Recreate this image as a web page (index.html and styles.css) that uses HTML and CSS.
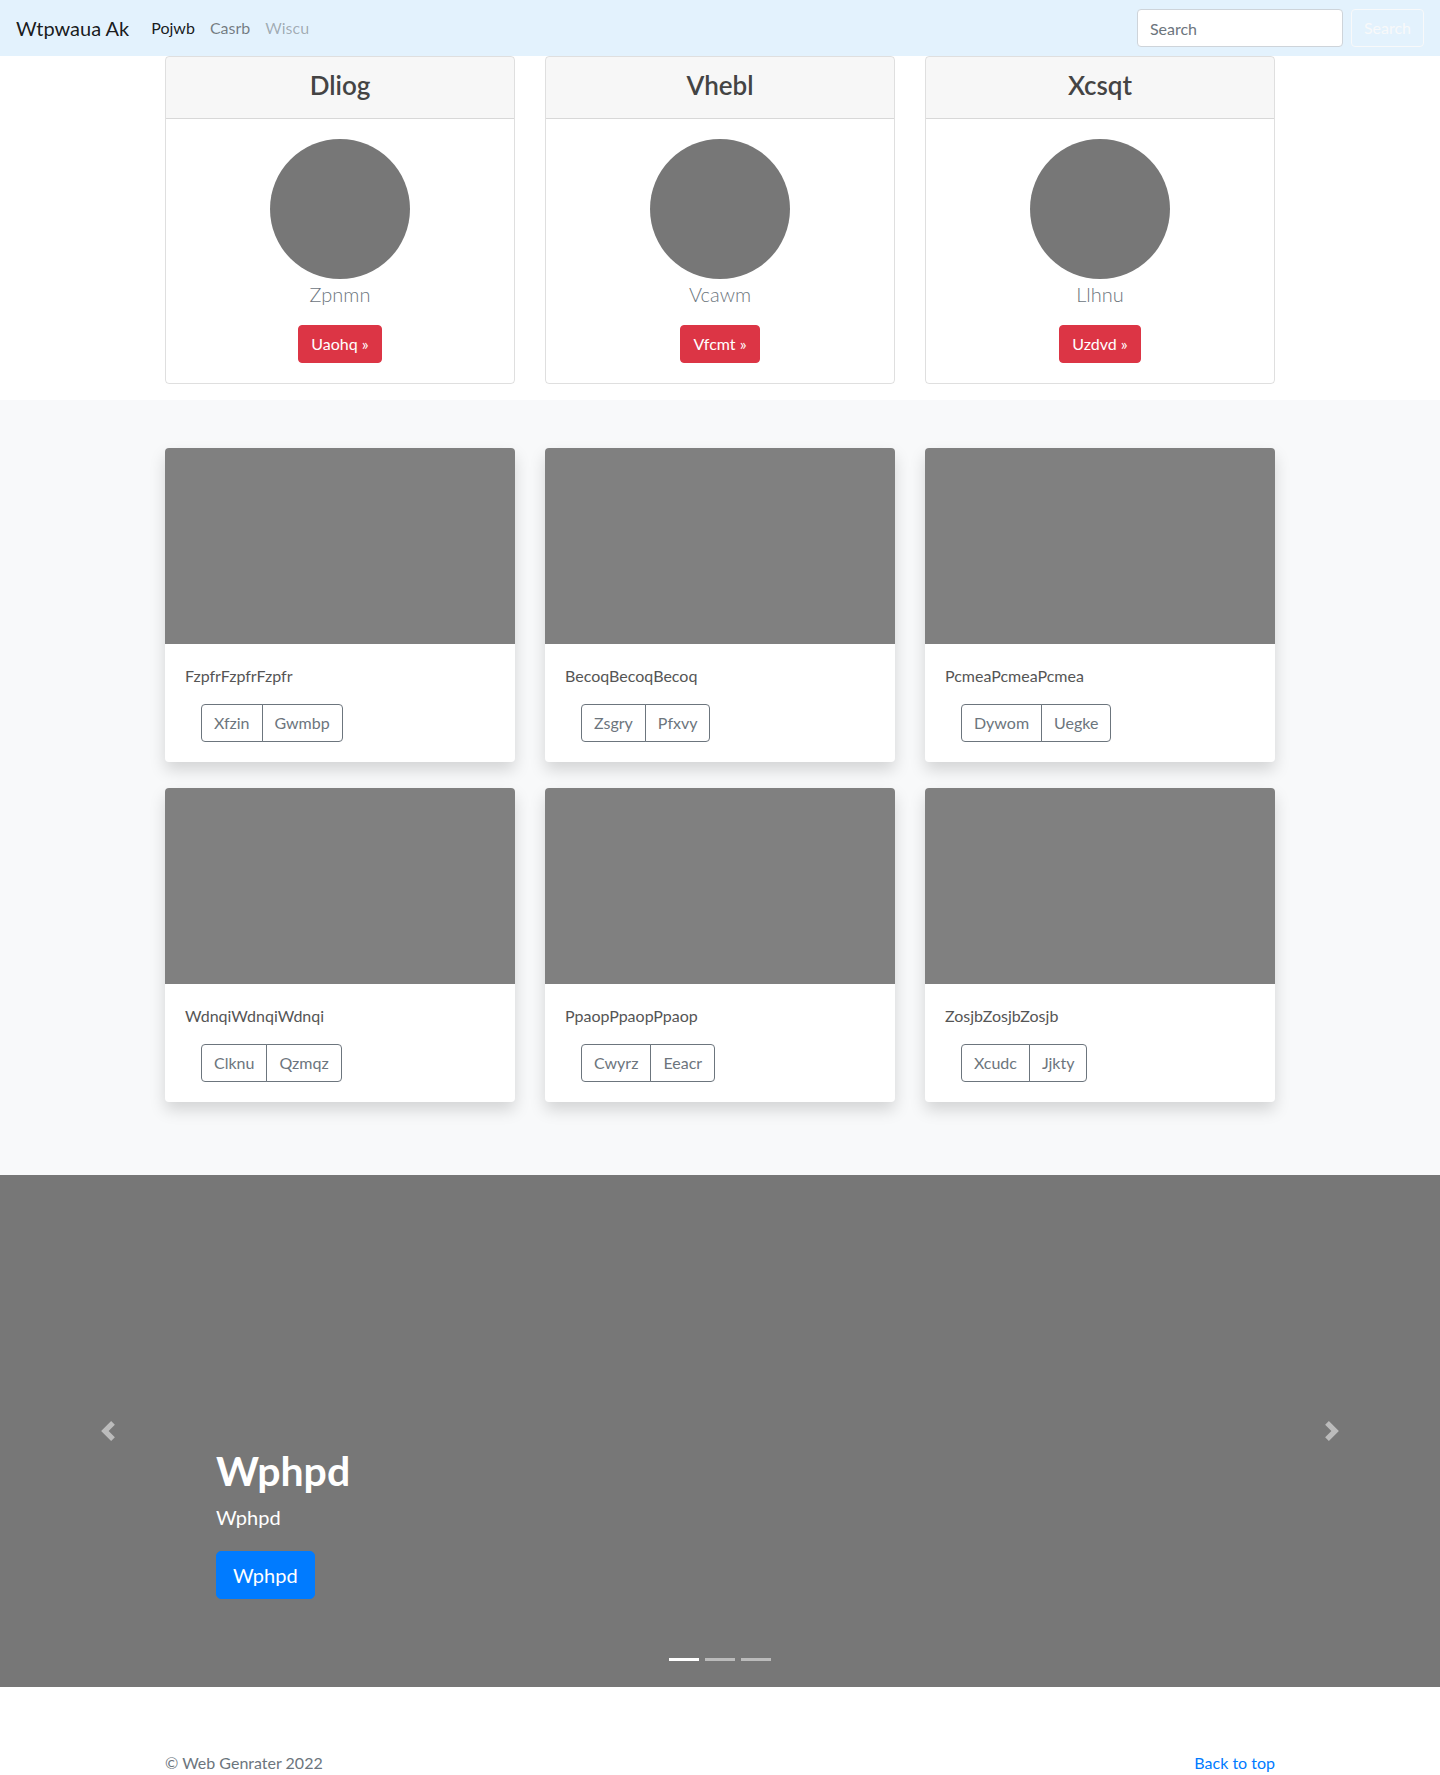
FILE: index.html
```
<!DOCTYPE html>
<html lang="en">
<head>
<meta charset="utf-8">
<title>Wtpwaua Ak</title>
<link rel="stylesheet" href="styles.css">
</head>
<body>
<nav class="navbar">
  <a class="brand" href="#">Wtpwaua Ak</a>
  <ul class="nav">
    <li><a class="nav-link active" href="#">Pojwb</a></li>
    <li><a class="nav-link" href="#">Casrb</a></li>
    <li><a class="nav-link disabled" href="#">Wiscu</a></li>
  </ul>
  <form class="search">
    <input class="search-input" type="text" placeholder="Search">
    <button class="search-btn" type="button">Search</button>
  </form>
</nav>

<section class="pricing">
  <div class="container grid-3">
    <div class="pcard">
      <div class="pcard-header"><h3>Dliog</h3></div>
      <div class="pcard-body">
        <div class="avatar"></div>
        <p class="lead">Zpnmn</p>
        <a class="btn btn-danger" href="#">Uaohq &raquo;</a>
      </div>
    </div>
    <div class="pcard">
      <div class="pcard-header"><h3>Vhebl</h3></div>
      <div class="pcard-body">
        <div class="avatar"></div>
        <p class="lead">Vcawm</p>
        <a class="btn btn-danger" href="#">Vfcmt &raquo;</a>
      </div>
    </div>
    <div class="pcard">
      <div class="pcard-header"><h3>Xcsqt</h3></div>
      <div class="pcard-body">
        <div class="avatar"></div>
        <p class="lead">Llhnu</p>
        <a class="btn btn-danger" href="#">Uzdvd &raquo;</a>
      </div>
    </div>
  </div>
</section>

<section class="album">
  <div class="container grid-3 album-grid">
    <div class="acard">
      <div class="thumb"></div>
      <div class="acard-body">
        <p class="acard-text">FzpfrFzpfrFzpfr</p>
        <div class="btn-group"><button class="btn btn-outline">Xfzin</button><button class="btn btn-outline">Gwmbp</button></div>
      </div>
    </div>
    <div class="acard">
      <div class="thumb"></div>
      <div class="acard-body">
        <p class="acard-text">BecoqBecoqBecoq</p>
        <div class="btn-group"><button class="btn btn-outline">Zsgry</button><button class="btn btn-outline">Pfxvy</button></div>
      </div>
    </div>
    <div class="acard">
      <div class="thumb"></div>
      <div class="acard-body">
        <p class="acard-text">PcmeaPcmeaPcmea</p>
        <div class="btn-group"><button class="btn btn-outline">Dywom</button><button class="btn btn-outline">Uegke</button></div>
      </div>
    </div>
    <div class="acard">
      <div class="thumb"></div>
      <div class="acard-body">
        <p class="acard-text">WdnqiWdnqiWdnqi</p>
        <div class="btn-group"><button class="btn btn-outline">Clknu</button><button class="btn btn-outline">Qzmqz</button></div>
      </div>
    </div>
    <div class="acard">
      <div class="thumb"></div>
      <div class="acard-body">
        <p class="acard-text">PpaopPpaopPpaop</p>
        <div class="btn-group"><button class="btn btn-outline">Cwyrz</button><button class="btn btn-outline">Eeacr</button></div>
      </div>
    </div>
    <div class="acard">
      <div class="thumb"></div>
      <div class="acard-body">
        <p class="acard-text">ZosjbZosjbZosjb</p>
        <div class="btn-group"><button class="btn btn-outline">Xcudc</button><button class="btn btn-outline">Jjkty</button></div>
      </div>
    </div>
  </div>
</section>

<div class="carousel">
  <ol class="indicators">
    <li class="active"></li>
    <li></li>
    <li></li>
  </ol>
  <a class="control control-prev" href="#">
    <svg class="control-icon" viewBox="0 0 8 8" width="20" height="20"><path fill="#fff" d="M5.25 0l-4 4 4 4 1.5-1.5L4.25 4l2.5-2.5L5.25 0z"/></svg>
  </a>
  <a class="control control-next" href="#">
    <svg class="control-icon" viewBox="0 0 8 8" width="20" height="20"><path fill="#fff" d="M2.75 0l-1.5 1.5L3.75 4l-2.5 2.5L2.75 8l4-4-4-4z"/></svg>
  </a>
  <div class="caption">
    <h1>Wphpd</h1>
    <p class="caption-sub">Wphpd</p>
    <p class="caption-action"><a class="btn btn-lg btn-primary" href="#">Wphpd</a></p>
  </div>
</div>

<footer class="footer">
  <div class="container footer-row">
    <p>&copy; Web Genrater 2022</p>
    <p><a href="#">Back to top</a></p>
  </div>
</footer>
</body>
</html>
```

FILE: styles.css
```
* { box-sizing: border-box; }

body {
  margin: 0;
  font-family: Lato, "Open Sans", Arial, sans-serif;
  font-size: 16px;
  line-height: 1.5;
  color: #212529;
  background: #fff;
}

a { text-decoration: none; }

.container {
  width: 1110px;
  margin: 0 auto;
}

.grid-3 {
  display: grid;
  grid-template-columns: repeat(3, 350px);
  column-gap: 30px;
}

/* navbar */
.navbar {
  display: flex;
  align-items: center;
  height: 56px;
  padding: 8px 16px;
  background: #e3f2fd;
}
.brand {
  font-size: 20px;
  line-height: 30px;
  color: rgba(0, 0, 0, 0.9);
  margin-right: 14px;
}
.nav {
  display: flex;
  list-style: none;
  margin: 0;
  padding: 0;
}
.nav-link {
  display: block;
  padding: 8px 7px 8px 8px;
  color: rgba(0, 0, 0, 0.5);
}
.nav-link.active { color: rgba(0, 0, 0, 0.9); }
.nav-link.disabled { color: rgba(0, 0, 0, 0.3); }

.search {
  margin-left: auto;
  display: flex;
  align-items: center;
  gap: 8px;
}
.search-input {
  width: 206px;
  height: 38px;
  padding: 6px 12px;
  font: inherit;
  color: #495057;
  background: #fff;
  border: 1px solid #ced4da;
  border-radius: 4px;
}
.search-input::placeholder { color: #6c757d; }
.search-btn {
  height: 38px;
  padding: 6px 12px;
  font: inherit;
  color: #f8f9fa;
  background: transparent;
  border: 1px solid #f8f9fa;
  border-radius: 4px;
}

/* pricing cards */
.pricing {
  padding-bottom: 16px;
}
.pcard {
  border: 1px solid rgba(0, 0, 0, 0.125);
  border-radius: 4px;
  text-align: center;
  overflow: hidden;
}
.pcard-header {
  background: rgba(0, 0, 0, 0.03);
  border-bottom: 1px solid rgba(0, 0, 0, 0.125);
  padding: 12px 20px 17px;
}
.pcard-header h3 {
  margin: 0;
  font-size: 26px;
  line-height: 32px;
  font-weight: 600;
  color: #444;
}
.pcard-body {
  padding: 20px;
}
.avatar {
  width: 140px;
  height: 140px;
  border-radius: 50%;
  background: #777;
  margin: 0 auto;
}
.lead {
  margin: 0 0 16px;
  font-size: 20px;
  line-height: 30px;
  font-weight: 300;
  color: #6c757d;
}

.btn {
  display: inline-block;
  padding: 6px 12px;
  font-family: inherit;
  font-size: 16px;
  line-height: 24px;
  border: 1px solid transparent;
  border-radius: 4px;
  background: transparent;
  cursor: pointer;
}
.btn-danger {
  color: #fff;
  background: #dc3545;
  border-color: #dc3545;
}
.btn-outline {
  color: #6c757d;
  border-color: #6c757d;
}
.btn-group {
  display: inline-flex;
  margin-left: 16px;
}
.btn-group .btn + .btn {
  margin-left: -1px;
}
.btn-group .btn:first-child {
  border-top-right-radius: 0;
  border-bottom-right-radius: 0;
}
.btn-group .btn:last-child {
  border-top-left-radius: 0;
  border-bottom-left-radius: 0;
}
.btn-lg {
  padding: 8px 16px;
  font-size: 20px;
  line-height: 30px;
  border-radius: 5px;
}
.btn-primary {
  color: #fff;
  background: #007bff;
  border-color: #007bff;
}

/* album */
.album {
  background: #f8f9fa;
  padding: 48px 0 73px;
}
.album-grid {
  row-gap: 26px;
}
.acard {
  background: #fff;
  border-radius: 4px;
  overflow: hidden;
  box-shadow: 0 8px 16px rgba(0, 0, 0, 0.15);
}
.thumb {
  height: 196px;
  background: #808080;
}
.acard-body {
  padding: 20px;
}
.acard-text {
  margin: 0 0 16px;
  color: #555;
}

/* carousel */
.carousel {
  position: relative;
  height: 512px;
  background: #777;
  overflow: hidden;
}
.control {
  position: absolute;
  top: 0;
  bottom: 0;
  width: 15%;
  display: flex;
  align-items: center;
  justify-content: center;
  opacity: 0.5;
}
.control-prev { left: 0; }
.control-next { right: 0; }
.control-icon { display: block; }

.indicators {
  position: absolute;
  left: 15%;
  right: 15%;
  bottom: 26px;
  display: flex;
  justify-content: center;
  list-style: none;
  margin: 0;
  padding: 0;
}
.indicators li {
  width: 30px;
  height: 3px;
  margin: 0 3px;
  background: #fff;
  opacity: 0.5;
}
.indicators li.active { opacity: 1; }

.caption {
  position: absolute;
  left: 15%;
  right: 15%;
  bottom: 48px;
  padding: 20px 0;
  color: #fff;
}
.caption h1 {
  margin: 0 0 8px;
  font-size: 41px;
  line-height: 48px;
  font-weight: 700;
}
.caption-sub {
  margin: 0 0 20px;
  font-size: 20px;
  line-height: 28px;
}
.caption-action {
  margin: 0 0 20px;
  line-height: 48px;
}
.caption-action .btn { vertical-align: top; }

/* footer */
.footer {
  padding: 64px 0 48px;
  color: #6c757d;
}
.footer-row {
  display: flex;
  justify-content: space-between;
}
.footer-row p { margin: 0 0 4px; }
.footer-row a { color: #007bff; }
```
